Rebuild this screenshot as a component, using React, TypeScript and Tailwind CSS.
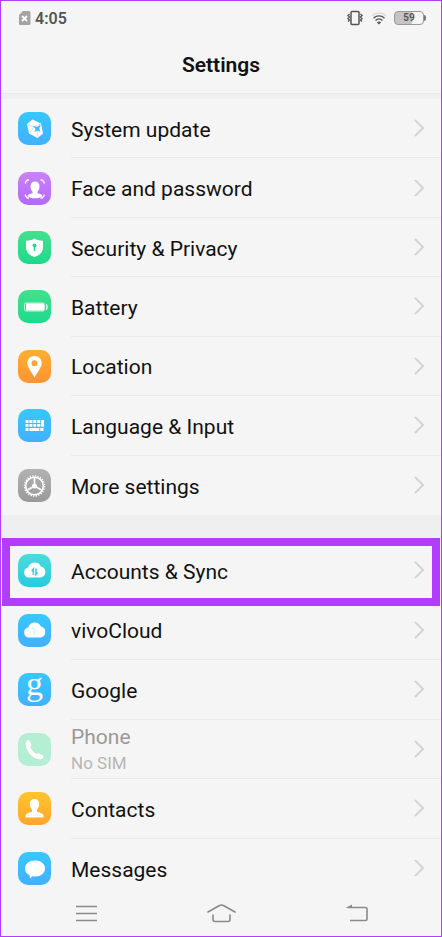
import type { ReactNode } from "react"
import clsx from "clsx"

type Item = {
  label: string
  detail?: string
  tile: string
  icon: ReactNode
  disabled?: boolean
  highlighted?: boolean
}

const blue = "bg-linear-to-b from-[#36c8ff] to-[#42b0ff]"
const green = "bg-linear-to-b from-[#42e08c] to-[#18da8c]"

const cloud = "M11 23.5a5 5 0 0 1-.8-9.900a6.700 6.700 0 0 1 12.700-1.100a5.600 5.600 0 0 1-.3 11z"

const general: Item[] = [
  {
    label: "System update",
    tile: blue,
    icon: (
      <>
        <path fill="#fff" d="M14.500 7.500 23 11.500 25 21.500 19.500 26 11 21.500 9 12z" />
        <path fill="none" stroke="#8fd6ff" strokeWidth=".6" d="m10 12.500 6 2.500 7-3M16 15l-4 6M19 17l.5 8" />
        <path fill="#3fbcff" d="m15.500 14 3.500 1 4-2.500-1.800 4 1.300 3.500-3-1.500-3 1.500 1-3z" />
      </>
    ),
  },
  {
    label: "Face and password",
    tile: "bg-linear-to-b from-[#ca82fc] to-[#b368fb]",
    icon: (
      <>
        <path
          fill="none"
          stroke="#fff"
          strokeWidth="1.300"
          d="M7.500 11.500V10l2-2H11M22.500 8H24l2 2v1.500M7.500 22.500V24l2 2H11M26 22.500V24l-2 2h-1.500"
        />
        <path
          fill="#fff"
          d="M17 9.500c3 0 4.500 2 4.500 5 0 2.500-1 4.300-2 5.200v1.500c3 .6 4.500 1.300 5 2.800-1.500 1.600-4.300 2.300-7.500 2.300s-6-.7-7.500-2.300c.5-1.500 2-2.200 5-2.800v-1.500c-1-.9-2-2.700-2-5.200 0-3 1.500-5 4.500-5z"
        />
      </>
    ),
  },
  {
    label: "Security & Privacy",
    tile: green,
    icon: (
      <>
        <path fill="#fff" d="M16.500 7.500c2.500 1.600 5 2.200 8.500 2.300v6.700c0 4.500-3 7.500-8.500 9.500-5.500-2-8.500-5-8.500-9.500V9.800c3.500-.1 6-.7 8.500-2.300z" />
        <circle cx="16.500" cy="14.500" r="2" fill="#25dc8c" />
        <path fill="#25dc8c" d="M15.800 15h1.400v5h-1.400z" />
      </>
    ),
  },
  {
    label: "Battery",
    tile: green,
    icon: (
      <>
        <rect x="6.500" y="13" width="20" height="8" rx="1.500" fill="none" stroke="#c5f6dd" />
        <rect x="8" y="13.500" width="18" height="7" rx="1" fill="#fff" />
        <path fill="none" stroke="#fff" strokeWidth="1.200" d="M28 14.500q1 .3 1 1.500v2q0 1.200-1 1.500" />
      </>
    ),
  },
  {
    label: "Location",
    tile: "bg-linear-to-b from-[#ffae31] to-[#ff9433]",
    icon: (
      <path
        fill="#fff"
        fillRule="evenodd"
        d="M16.500 6c4.300 0 7.200 3 7.200 7 0 4.500-4.500 9-7.200 14.500C13.800 22 9.300 17.500 9.300 13c0-4 2.900-7 7.200-7zm0 4.300a3 3 0 1 0 0 6 3 3 0 0 0 0-6z"
      />
    ),
  },
  {
    label: "Language & Input",
    tile: blue,
    icon: (
      <path
        fill="none"
        stroke="#fff"
        strokeWidth="2.800"
        d="M7.500 12.500h3m.9 0h3m.9 0h3m.9 0h3m.9 0h3M7.500 16.300h3m.9 0h3m.9 0h3m.9 0h3m.6 0h3.300M7.500 20.500h3m.9 0h10m.9 0h3.200M24.400 12v5"
      />
    ),
  },
  {
    label: "More settings",
    tile: "bg-linear-to-b from-[#b2b2b2] to-[#9a9a9a]",
    icon: (
      <>
        <circle cx="16.500" cy="17" r="8.800" fill="none" stroke="#fff" strokeWidth="1.600" />
        <circle cx="16.500" cy="17" r="10" fill="none" stroke="#fff" strokeWidth="1.500" strokeDasharray="1.300 1.318" />
        <circle cx="16.500" cy="17" r="2.500" fill="#fff" />
        <path stroke="#fff" strokeWidth="1.700" d="M16.500 17V9M16.500 17l-7 4M16.500 17l7 4" />
      </>
    ),
  },
]

const apps: Item[] = [
  {
    label: "Accounts & Sync",
    tile: "bg-linear-to-b from-[#4bdbdc] to-[#24cbe0]",
    highlighted: true,
    icon: (
      <>
        <path fill="#fff" d={cloud} />
        <path fill="none" stroke="#35cbdc" strokeWidth="1.500" d="M15.400 21v-6l-1.500 2M18 14.500v6l1.500-2" />
      </>
    ),
  },
  {
    label: "vivoCloud",
    tile: blue,
    icon: (
      <>
        <path fill="#fff" d={cloud} />
        <path fill="none" stroke="#9adbff" strokeWidth=".6" d="M13.500 13.800c2.500.5 3.800 2.500 3.500 4.700-.2 1.500-.9 2.500-2 3" />
      </>
    ),
  },
  {
    label: "Google",
    tile: blue,
    icon: (
      <text x="16.500" y="22" textAnchor="middle" fill="#fff" className="font-['Liberation_Serif',serif] text-[34px]">
        g
      </text>
    ),
  },
  {
    label: "Phone",
    detail: "No SIM",
    tile: "bg-[#b5efd3]",
    disabled: true,
    icon: (
      <path
        fill="#fff"
        d="M9 7.500c1-.9 2-.5 2.700.6l1.500 2.800c.5 1 .2 1.800-1.200 2.600 1 3 3.500 6 6.700 7.600 1-1 1.800-1.200 2.700-.6l3.400 2c1 .7 1 1.600.2 2.400-1.500 1.500-4 1.800-6.700.7C13 23.300 9.200 18.700 8 13.500c-.6-2.500-.3-4.700 1-6z"
      />
    ),
  },
  {
    label: "Contacts",
    tile: "bg-linear-to-b from-[#ffc52d] to-[#ffa52d]",
    icon: (
      <path
        fill="#fff"
        d="M16.500 7c3 0 4.700 2 4.700 5 0 2.500-1 4.500-2.200 5.500v2.300c4 1.100 6.500 2 6.500 4.200v1.500H7.500V24c0-2.200 2.500-3.100 6.500-4.200v-2.300c-1.200-1-2.200-3-2.200-5.500 0-3 1.700-5 4.700-5z"
      />
    ),
  },
  {
    label: "Messages",
    tile: blue,
    icon: (
      <path
        fill="#fff"
        d="M17 8.500c5.800 0 10 3.500 10 8s-4.200 8-10 8c-1 0-2 0-2.800-.3L12 26.500l-.5-3.200C8.600 22 7 19.500 7 16.500c0-4.500 4.200-8 10-8z"
      />
    ),
  },
]

function Row({ item, last }: { item: Item; last: boolean }) {
  return (
    <li className="relative">
      <button
        type="button"
        disabled={item.disabled}
        className="flex h-full w-full items-center gap-5 pl-[17px] text-left"
      >
        <span className={clsx("size-[33px] shrink-0 rounded-[10px]", item.tile)}>
          <svg viewBox="0 0 33 33" className="size-full overflow-visible" aria-hidden="true">
            {item.icon}
          </svg>
        </span>
        <span
          className={clsx(
            "flex h-full flex-1 items-center justify-between pr-4",
            !last && "border-b border-[#e9e9e9]"
          )}
        >
          <span className={clsx("pt-[3px]", item.disabled ? "text-[#999]" : "text-[#111]")}>
            <span className="block text-[21px] leading-[26px]">{item.label}</span>
            {item.detail && <span className="block text-[17px] leading-[26px] text-[#b5b5b5]">{item.detail}</span>}
          </span>
          <svg viewBox="0 0 12 18" className="h-[18px] w-3 shrink-0" fill="none" stroke="#d4d4d4" strokeWidth="2" aria-hidden="true">
            <path d="m2 1 8 8-8 8" />
          </svg>
        </span>
      </button>
      {item.highlighted && (
        <span className="pointer-events-none absolute inset-x-px -top-[3px] -bottom-[5px] z-10 border-8 border-[#b23dff]" />
      )}
    </li>
  )
}

function Group({ items, className }: { items: Item[]; className: string }) {
  return (
    <ul className={clsx("grid auto-rows-fr", className)}>
      {items.map((item, i) => (
        <Row key={item.label} item={item} last={i === items.length - 1} />
      ))}
    </ul>
  )
}

function StatusBar() {
  return (
    <div className="flex h-[34px] items-center justify-between pr-[15px] pl-[17px] text-[#555]">
      <div className="flex items-center gap-1">
        <svg viewBox="0 0 13 16" className="h-4 w-[13px]" aria-hidden="true">
          <path fill="#a3a3a3" d="M5 1h6q1.500 0 1.500 1.500v11q0 1.500-1.500 1.500H2.500Q1 15 1 13.500V5z" />
          <path stroke="#fff" strokeWidth="1.800" d="m4 6 5 5M9 6l-5 5" />
        </svg>
        <span className="pt-px text-base font-semibold">4:05</span>
      </div>
      <div className="flex items-center gap-[7px]">
        <svg viewBox="0 0 18 16" className="h-4 w-[18px]" fill="none" stroke="#555" aria-hidden="true">
          <rect x="5" y="1.500" width="8" height="13" rx="1" strokeWidth="1.500" />
          <path strokeWidth="1.400" d="M3.500 4 2 5.500 3.500 7 2 8.500 3.500 10 2 11.500M14.500 4 16 5.500 14.500 7 16 8.500 14.500 10l1.500 1.500" />
        </svg>
        <svg viewBox="0 0 16 14" className="h-[14px] w-4" fill="none" stroke="#555" strokeWidth="1.300" aria-hidden="true">
          <path stroke="#dedede" d="M.8 5C4.800 1 11.200 1 15.200 5" />
          <path d="M2.500 7.200c3-3 8-3 11 0M4.500 9.500c2-2 5-2 7 0" />
          <path fill="#555" stroke="none" d="M5.800 11.200q2.200-1.400 4.400 0L8 13.500z" />
        </svg>
        <div className="flex items-center">
          <div className="flex h-[14px] w-[30px] items-center justify-center rounded-[4px] border border-[#999] bg-linear-to-r from-[#c4c4c4] from-60% to-[#f5f5f5] to-60% text-[10px] leading-none font-bold">
            59
          </div>
          <div className="h-[6px] w-[2px] rounded-r-sm bg-[#777]" />
        </div>
      </div>
    </div>
  )
}

function NavBar() {
  return (
    <nav className="flex h-[38px] items-center justify-between px-[72px] pb-2">
      <button type="button" aria-label="Recent apps">
        <svg viewBox="0 0 24 20" className="h-5 w-6" stroke="#8a8a8a" strokeWidth="1.500" aria-hidden="true">
          <path d="M3 3.500h21M3 10.500h21M3 17.500h21" />
        </svg>
      </button>
      <button type="button" aria-label="Home">
        <svg viewBox="0 0 30 20" className="h-5 w-[30px]" fill="none" stroke="#8a8a8a" strokeWidth="1.600" strokeLinecap="round" aria-hidden="true">
          <path d="M2 9 13.500 2.500q2-1 4 0L29 9M7 12v4.500q0 2 2 2h13q2 0 2-2V12" />
        </svg>
      </button>
      <button type="button" aria-label="Back">
        <svg viewBox="0 0 24 20" className="h-5 w-6" fill="none" stroke="#8a8a8a" strokeWidth="1.600" aria-hidden="true">
          <path d="M3 4.500h17.500q1.500 0 1.500 1.500v10q0 1.500-1.500 1.500H5" />
          <path fill="#8a8a8a" stroke="none" d="m.5 5 6.500-3.500v3.500z" />
        </svg>
      </button>
    </nav>
  )
}

export default function App() {
  return (
    <div className="min-h-screen border border-[#b23dff] bg-[#f5f5f5] font-[Roboto,sans-serif]">
      <header>
        <StatusBar />
        <h1 className="flex h-[58px] items-center justify-center pt-[3px] text-[21px] font-semibold text-[#111]">Settings</h1>
      </header>
      <div className="h-[6px] border-t border-[#e9e9e9] bg-[#f0f0f0]" />
      <main>
        <Group items={general} className="min-h-[416px]" />
        <div className="h-[26px] bg-[#efefef]" />
        <Group items={apps} className="min-h-[357px]" />
      </main>
      <NavBar />
    </div>
  )
}
